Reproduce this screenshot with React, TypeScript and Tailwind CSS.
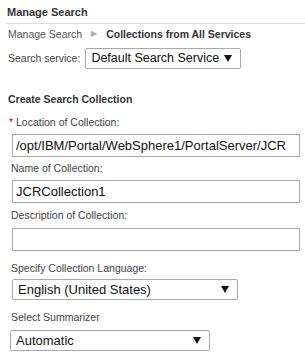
import React from 'react';

const Arrow = () => (
  <svg width="8" height="7" viewBox="0 0 8 7" className="shrink-0">
    <path d="M0 0 L8 0 L4 7 Z" fill="#111" />
  </svg>
);

const Select: React.FC<{ value: string; width: string; textSize?: string }> = ({ value, width, textSize = 'text-[13px]' }) => (
  <div className={`flex items-center justify-between h-[21px] border border-[#a9a9a9] rounded-[2px] bg-white pl-[5px] pr-[8px] ${width}`}>
    <span className={`${textSize} leading-none text-[#111] whitespace-nowrap`}>{value}</span>
    <Arrow />
  </div>
);

const Field: React.FC<{ value?: string }> = ({ value }) => (
  <div className="ml-[12px] mr-[5px] h-[23px] border border-[#a9a9a9] bg-white flex items-center pl-[3px] overflow-hidden">
    <span className="text-[13px] leading-none text-[#111] whitespace-nowrap">{value}</span>
  </div>
);

const Label: React.FC<{ children: React.ReactNode; className?: string }> = ({ children, className = '' }) => (
  <div className={`text-[10.5px] leading-[14px] text-[#444] ${className}`}>{children}</div>
);

export default function App() {
  return (
    <div className="w-[305px] h-[354px] bg-white overflow-hidden" style={{ fontFamily: '"Liberation Sans", Arial, sans-serif' }}>
      <div className="pt-[5px] pl-[7px] text-[11px] leading-[14px] font-bold text-[#333]">Manage Search</div>
      <div className="mt-[4px] ml-[6px] border-t border-[#dcdcdc]" />
      <div className="mt-[3px] pl-[8px] flex items-center text-[10.5px] leading-[14px]">
        <span className="text-[#555]">Manage Search</span>
        <span className="ml-[9px] mr-[9px] text-[#aaa] text-[8px]">▶</span>
        <span className="font-bold text-[#333]">Collections from All Services</span>
      </div>
      <div className="mt-[7px] pl-[8px] flex items-center gap-[5px]">
        <span className="text-[10.5px] text-[#444]">Search service:</span>
        <Select value="Default Search Service" width="w-[156px]" textSize="text-[12.5px]" />
      </div>
      <div className="mt-[23px] pl-[8px] text-[10.5px] leading-[14px] font-bold text-[#333]">Create Search Collection</div>
      <Label className="mt-[9px] pl-[9px]">
        <span className="text-[#c00]">*</span> Location of Collection:
      </Label>
      <div className="mt-[5px]">
        <Field value="/opt/IBM/Portal/WebSphere1/PortalServer/JCR" />
      </div>
      <Label className="mt-[4px] pl-[11px]">Name of Collection:</Label>
      <div className="mt-[5px]">
        <Field value="JCRCollection1" />
      </div>
      <Label className="mt-[5px] pl-[11px]">Description of Collection:</Label>
      <div className="mt-[6px]">
        <Field />
      </div>
      <Label className="mt-[10px] pl-[11px]">Specify Collection Language:</Label>
      <div className="mt-[4px] pl-[12px]">
        <Select value="English (United States)" width="w-[226px]" />
      </div>
      <Label className="mt-[10px] pl-[11px]">Select Summarizer</Label>
      <div className="mt-[6px] pl-[10px]">
        <Select value="Automatic" width="w-[200px]" />
      </div>
    </div>
  );
}
